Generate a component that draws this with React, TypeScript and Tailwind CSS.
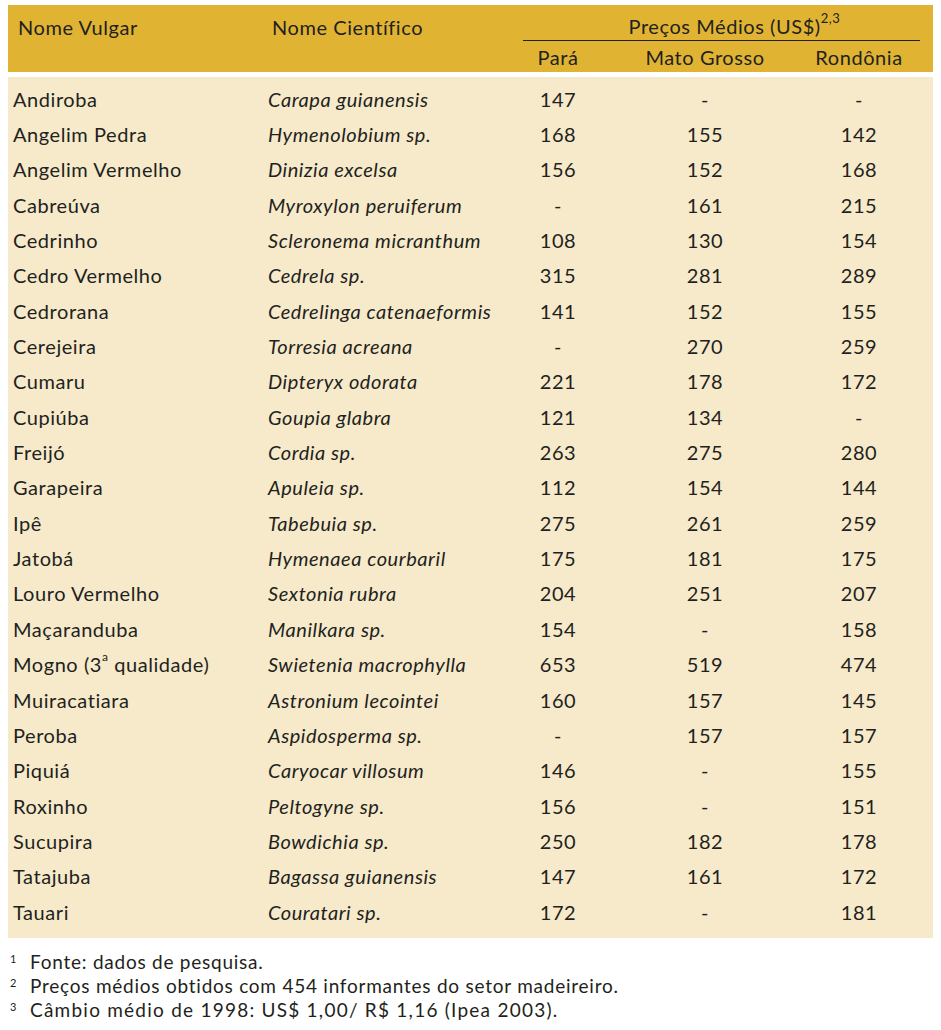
const rows: [string, React.ReactNode, string, string, string][] = [
  ["Andiroba", "Carapa guianensis", "147", "-", "-"],
  ["Angelim Pedra", "Hymenolobium sp.", "168", "155", "142"],
  ["Angelim Vermelho", "Dinizia excelsa", "156", "152", "168"],
  ["Cabreúva", "Myroxylon peruiferum", "-", "161", "215"],
  ["Cedrinho", "Scleronema micranthum", "108", "130", "154"],
  ["Cedro Vermelho", "Cedrela sp.", "315", "281", "289"],
  ["Cedrorana", "Cedrelinga catenaeformis", "141", "152", "155"],
  ["Cerejeira", "Torresia acreana", "-", "270", "259"],
  ["Cumaru", "Dipteryx odorata", "221", "178", "172"],
  ["Cupiúba", "Goupia glabra", "121", "134", "-"],
  ["Freijó", "Cordia sp.", "263", "275", "280"],
  ["Garapeira", "Apuleia sp.", "112", "154", "144"],
  ["Ipê", "Tabebuia sp.", "275", "261", "259"],
  ["Jatobá", "Hymenaea courbaril", "175", "181", "175"],
  ["Louro Vermelho", "Sextonia rubra", "204", "251", "207"],
  ["Maçaranduba", "Manilkara sp.", "154", "-", "158"],
  ["Mogno (3ª qualidade)", "Swietenia macrophylla", "653", "519", "474"],
  ["Muiracatiara", "Astronium lecointei", "160", "157", "145"],
  ["Peroba", "Aspidosperma sp.", "-", "157", "157"],
  ["Piquiá", "Caryocar villosum", "146", "-", "155"],
  ["Roxinho", "Peltogyne sp.", "156", "-", "151"],
  ["Sucupira", "Bowdichia sp.", "250", "182", "178"],
  ["Tatajuba", "Bagassa guianensis", "147", "161", "172"],
  ["Tauari", "Couratari sp.", "172", "-", "181"],
];

const Name = ({ text }: { text: string }) => {
  if (text.includes("3ª")) {
    return (
      <span>
        Mogno (3<sup className="text-[12px] align-[5px]">a</sup> qualidade)
      </span>
    );
  }
  return <span>{text}</span>;
};

const App = () => {
  return (
    <main
      className="w-[941px] h-[1030px] bg-white text-[#231f20] pt-[5px] tracking-[0.035em]"
      style={{ fontFamily: "Lato, 'Liberation Sans', sans-serif" }}
    >
      {/* cabeçalho */}
      <div className="mx-[8px] h-[67px] bg-[#e0b432] grid grid-cols-[255px_245px_100px_194px_114px_1fr] text-[20px]">
        <div className="pl-[10px] pt-[10px] leading-[24px]">Nome Vulgar</div>
        <div className="pl-[9px] pt-[10px] leading-[24px]">Nome Científico</div>
        <div className="col-span-4 flex flex-col">
          <div className="mx-[15px] mr-[13px] border-b border-[#231f20] text-center pl-[26px] pt-[9px] h-[36px] leading-[24px]">
            Preços Médios (US$)
            <sup className="text-[13px] align-[5px]">2,3</sup>
          </div>
          <div className="grid grid-cols-[100px_194px_114px] leading-[24px] pt-[4px]">
            <div className="text-center">Pará</div>
            <div className="text-center">Mato Grosso</div>
            <div className="text-center">Rondônia</div>
          </div>
        </div>
      </div>

      {/* corpo */}
      <div className="mx-[8px] mt-[5px] bg-[#f6eacb] pt-[4px] pb-[9px] grid grid-cols-[255px_245px_100px_194px_114px_1fr] auto-rows-[35.35px] text-[20px]">
        {rows.map(([vulgar, cientifico, para, mt, ro]) => (
          <div key={vulgar} className="contents">
            <div className="pl-[5px] flex items-center">
              <Name text={vulgar} />
            </div>
            <div className="pl-[5px] flex items-center italic">{cientifico}</div>
            <div className="flex items-center justify-center">{para}</div>
            <div className="flex items-center justify-center">{mt}</div>
            <div className="flex items-center justify-center">{ro}</div>
            <div />
          </div>
        ))}
      </div>

      {/* notas */}
      <div className="mt-[12px] text-[19px] leading-[24px] tracking-[0.04em]">
        <div className="flex">
          <span className="w-[30px] pl-[10px] text-[11px] leading-[18px]">1</span>
          <span>Fonte: dados de pesquisa.</span>
        </div>
        <div className="flex">
          <span className="w-[30px] pl-[10px] text-[11px] leading-[18px]">2</span>
          <span>Preços médios obtidos com 454 informantes do setor madeireiro.</span>
        </div>
        <div className="flex">
          <span className="w-[30px] pl-[10px] text-[11px] leading-[18px]">3</span>
          <span className="tracking-[0.065em]">Câmbio médio de 1998: US$ 1,00/ R$ 1,16 (Ipea 2003).</span>
        </div>
      </div>
    </main>
  );
};

export default App;
